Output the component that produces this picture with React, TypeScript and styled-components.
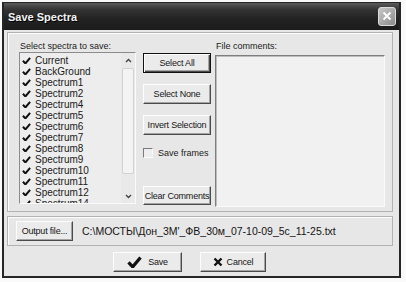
import React from "react";
import styled, { createGlobalStyle, css } from "styled-components";

const GlobalStyle = createGlobalStyle`
  html, body {
    margin: 0;
    padding: 0;
    background: #fafafa;
  }
  body {
    font-family: "Liberation Sans", Arial, sans-serif;
    color: #1a1a1a;
  }
`;

const Window = styled.div`
  box-sizing: border-box;
  margin: 2px 0 0 2px;
  width: 399px;
  height: 276px;
  border: 2px solid #262626;
  border-top-width: 1px;
  background: #e7e7e7;
  display: flex;
  flex-direction: column;
`;

const TitleBar = styled.div`
  height: 27px;
  flex-shrink: 0;
  display: flex;
  align-items: center;
  justify-content: space-between;
  padding: 0 3px 0 4px;
  background: linear-gradient(#5a5a5a 0%, #333 25%, #222 60%, #1c1c1c 100%);
`;

const Title = styled.span`
  color: #f2f2f2;
  font-size: 11px;
  font-weight: bold;
  text-shadow: 1px 1px 0 #000;
`;

const CloseButton = styled.div`
  box-sizing: border-box;
  width: 18px;
  height: 19px;
  margin-top: -1px;
  border: 1px solid #dcdcdc;
  border-radius: 3px;
  background: linear-gradient(135deg, #c8c8c8, #8c8c8c);
  display: flex;
  align-items: center;
  justify-content: center;
`;

const Group = styled.div<{ $height: number }>`
  box-sizing: border-box;
  height: ${p => p.$height}px;
  margin: 0 6px 0 3px;
  border: 1px solid #b2b2b2;
  box-shadow: inset 1px 1px 0 #fdfdfd;
  display: flex;
`;

const MainGroup = styled(Group)`
  margin-top: 2px;
  padding: 7px 7px 4px 11px;
`;

const FileGroup = styled(Group)`
  margin-top: 4px;
  align-items: center;
  padding-left: 8px;
`;

const Column = styled.div`
  display: flex;
  flex-direction: column;
`;

const ListColumn = styled(Column)`
  width: 117px;
`;

const ButtonColumn = styled(Column)`
  width: 68px;
  margin-left: 7px;
  padding: 13px 0 2px;
  gap: 11px;
`;

const CommentColumn = styled(Column)`
  flex: 1;
  margin-left: 4px;
`;

const Label = styled.div`
  height: 12px;
  line-height: 12px;
  font-size: 9px;
  padding-left: 1px;
  white-space: nowrap;
`;

const ListBox = styled.div`
  box-sizing: border-box;
  height: 152px;
  display: flex;
  border: 1px solid;
  border-color: #8c8c8c #fafafa #fafafa #8c8c8c;
  background: #ededed;
  overflow: hidden;
`;

const Items = styled.div`
  flex: 1;
  padding: 2px 0 0 2px;
  overflow: hidden;
`;

const Item = styled.div`
  height: 11px;
  display: flex;
  align-items: center;
  gap: 4px;
  font-size: 10px;
  line-height: 11px;
  white-space: nowrap;
`;

const ScrollBar = styled.div`
  width: 14px;
  display: flex;
  flex-direction: column;
  background: #e9e9e9;
`;

const ScrollArrow = styled.div`
  height: 14px;
  display: flex;
  align-items: center;
  justify-content: center;
`;

const ScrollTrack = styled.div`
  flex: 1;
  padding: 1px 1px;
  display: flex;
  flex-direction: column;
`;

const ScrollThumb = styled.div`
  height: 104px;
  background: #f3f3f3;
  border: 1px solid #d2d2d2;
  border-radius: 2px;
`;

const Button = styled.button<{ $default?: boolean; $width?: number }>`
  box-sizing: border-box;
  flex-shrink: 0;
  height: 20px;
  width: ${p => (p.$width ? `${p.$width}px` : "100%")};
  padding: 0;
  display: flex;
  align-items: center;
  justify-content: center;
  gap: 6px;
  font-family: "Liberation Sans", Arial, sans-serif;
  font-size: 9px;
  letter-spacing: -0.2px;
  color: #151515;
  background: #ebebeb;
  border: 1px solid;
  border-color: #fdfdfd #4a4a4a #4a4a4a #fdfdfd;
  box-shadow: inset -1px -1px 0 #a4a4a4;
  white-space: nowrap;
  ${p =>
    p.$default &&
    css`
      border: 1px solid #111;
      box-shadow: inset 1px 1px 0 #fdfdfd, inset -1px -1px 0 #4a4a4a, inset -2px -2px 0 #a4a4a4;
    `}
`;

const ClearButton = styled(Button)`
  height: 19px;
  margin-top: auto;
`;

const CheckRow = styled.label`
  height: 14px;
  display: flex;
  align-items: center;
  gap: 5px;
  font-size: 9px;
`;

const CheckBox = styled.span`
  box-sizing: border-box;
  width: 10px;
  height: 10px;
  border: 1px solid;
  border-color: #7a7a7a #fafafa #fafafa #7a7a7a;
  background: #eeeeee;
`;

const Memo = styled.div`
  flex: 1;
  margin-top: 3px;
  border: 1px solid;
  border-color: #7e7e7e #fafafa #fafafa #7e7e7e;
  box-shadow: inset 1px 1px 0 #bdbdbd;
  background: #f1f1f1;
`;

const PathText = styled.span`
  margin-left: 9px;
  font-size: 10.5px;
  color: #151515;
  white-space: nowrap;
`;

const Footer = styled.div`
  display: flex;
  gap: 18px;
  margin-top: 6px;
  padding-left: 109px;
`;

const spectra = [
  "Current",
  "BackGround",
  "Spectrum1",
  "Spectrum2",
  "Spectrum4",
  "Spectrum5",
  "Spectrum6",
  "Spectrum7",
  "Spectrum8",
  "Spectrum9",
  "Spectrum10",
  "Spectrum11",
  "Spectrum12",
  "Spectrum14",
];

function Tick({ size = 9 }: { size?: number }) {
  return (
    <svg width={size} height={size * 0.85} viewBox="0 0 10 8.5">
      <path d="M1 4.2 L3.8 7.2 L9 1" fill="none" stroke="#111" strokeWidth="2.2" />
    </svg>
  );
}

function Chevron({ up }: { up?: boolean }) {
  return (
    <svg width="7" height="5" viewBox="0 0 7 5">
      <path d={up ? "M1 4 L3.5 1.5 L6 4" : "M1 1 L3.5 3.5 L6 1"} fill="none" stroke="#444" strokeWidth="1.4" />
    </svg>
  );
}

function App() {
  return (
    <>
      <GlobalStyle />
      <Window>
        <TitleBar>
          <Title>Save Spectra</Title>
          <CloseButton>
            <svg width="10" height="10" viewBox="0 0 10 10">
              <path d="M1.5 1.5 L8.5 8.5 M8.5 1.5 L1.5 8.5" stroke="#fff" strokeWidth="1.8" />
            </svg>
          </CloseButton>
        </TitleBar>

        <MainGroup $height={180}>
          <ListColumn>
            <Label>Select spectra to save:</Label>
            <ListBox>
              <Items>
                { spectra.map(name => (
                  <Item key={ name }>
                    <Tick />
                    { name }
                  </Item>
                )) }
              </Items>
              <ScrollBar>
                <ScrollArrow><Chevron up /></ScrollArrow>
                <ScrollTrack>
                  <ScrollThumb />
                </ScrollTrack>
                <ScrollArrow><Chevron /></ScrollArrow>
              </ScrollBar>
            </ListBox>
          </ListColumn>

          <ButtonColumn>
            <Button $default>Select All</Button>
            <Button>Select None</Button>
            <Button>Invert Selection</Button>
            <CheckRow>
              <CheckBox />
              Save frames
            </CheckRow>
            <ClearButton>Clear Comments</ClearButton>
          </ButtonColumn>

          <CommentColumn>
            <Label>File comments:</Label>
            <Memo />
          </CommentColumn>
        </MainGroup>

        <FileGroup $height={30}>
          <Button $width={57}>Output file...</Button>
          <PathText>C:\МОСТЫ\Дон_3М'_ФВ_30м_07-10-09_5с_11-25.txt</PathText>
        </FileGroup>

        <Footer>
          <Button $width={69}>
            <Tick size={15} />
            Save
          </Button>
          <Button $width={66} style={ { gap: "4px" } }>
            <svg width="10" height="10" viewBox="0 0 10 10">
              <path d="M1.5 1.5 L8.5 8.5 M8.5 1.5 L1.5 8.5" stroke="#111" strokeWidth="2.4" />
            </svg>
            Cancel
          </Button>
        </Footer>
      </Window>
    </>
  );
}

export default App;
